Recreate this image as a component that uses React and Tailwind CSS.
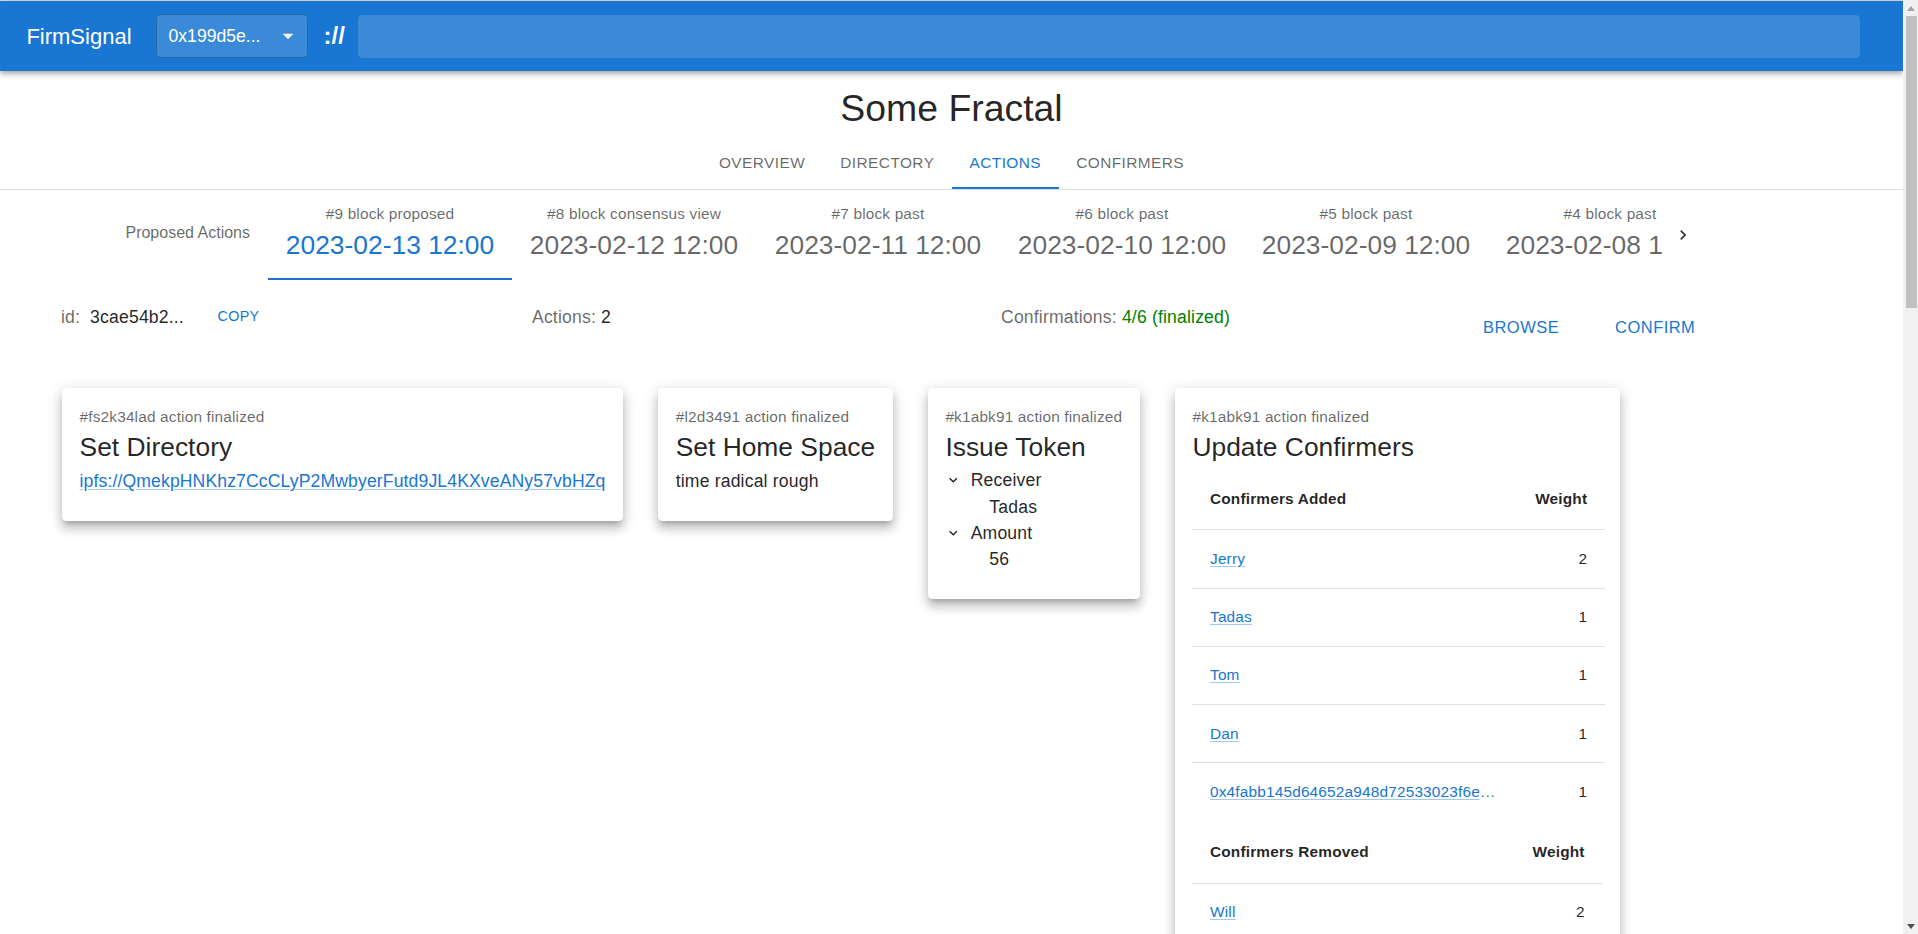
import React from 'react';

const BLOCKS = [
  { label: '#9 block proposed', date: '2023-02-13 12:00', active: true },
  { label: '#8 block consensus view', date: '2023-02-12 12:00' },
  { label: '#7 block past', date: '2023-02-11 12:00' },
  { label: '#6 block past', date: '2023-02-10 12:00' },
  { label: '#5 block past', date: '2023-02-09 12:00' },
  { label: '#4 block past', date: '2023-02-08 12:00' },
  { label: '#3 block past', date: '2023-02-07 12:00' },
];

const PAGE_TABS = ['Overview', 'Directory', 'Actions', 'Confirmers'];

const ADDED = [
  { name: 'Jerry', weight: 2 },
  { name: 'Tadas', weight: 1 },
  { name: 'Tom', weight: 1 },
  { name: 'Dan', weight: 1 },
  { name: '0x4fabb145d64652a948d72533023f6e7a623c7c53', weight: 1 },
];

const REMOVED = [{ name: 'Will', weight: 2 }];

const cardShadow =
  'shadow-[0px_5px_5px_-3px_rgba(0,0,0,0.2),0px_8px_10px_1px_rgba(0,0,0,0.14),0px_3px_14px_2px_rgba(0,0,0,0.12)]';

function ExpandMore() {
  return (
    <svg viewBox="0 0 24 24" className="w-[18px] h-[18px] fill-[#000000de]">
      <path d="M16.59 8.59 12 13.17 7.41 8.59 6 10l6 6 6-6z" />
    </svg>
  );
}

function Card({ overline, title, children, className = '' }) {
  return (
    <div className={`bg-white rounded-[4.4px] px-[17.6px] pt-[17.6px] pb-[26.4px] ${cardShadow} ${className}`}>
      <div className="text-[15.4px] leading-[22px] tracking-[0.16px] text-black/60 whitespace-nowrap">{overline}</div>
      <div className="text-[26.4px] leading-[39.6px] tracking-normal text-black/87 whitespace-nowrap">{title}</div>
      {children}
    </div>
  );
}

function TreeItem({ label, value }) {
  return (
    <div>
      <div className="flex items-center h-[26.4px]">
        <span className="w-[16.5px] mr-[4.4px] flex justify-center">
          <ExpandMore />
        </span>
        <span className="pl-[4.4px]">{label}</span>
      </div>
      <div className="ml-[18.7px] flex items-center h-[26.4px]">
        <span className="w-[16.5px] mr-[4.4px]" />
        <span className="pl-[4.4px]">{value}</span>
      </div>
    </div>
  );
}

function ConfirmerTable({ heading, rows }) {
  return (
    <table className="w-full border-collapse">
      <thead>
        <tr>
          <th className="text-left font-bold text-[15.4px] leading-[27px] p-[17.6px] border-b border-[#e0e0e0] text-black/87">
            {heading}
          </th>
          <th className="text-right font-bold text-[15.4px] leading-[27px] p-[17.6px] border-b border-[#e0e0e0] text-black/87">
            Weight
          </th>
        </tr>
      </thead>
      <tbody>
        {rows.map((r, i) => (
          <tr key={r.name}>
            <td className={`p-[17.6px] text-[15.4px] leading-[22px] ${i < rows.length - 1 ? 'border-b border-[#e0e0e0]' : ''}`}>
              <span className="block max-w-[290px] truncate text-[#1976d2]">
                <a href="#" className="underline decoration-[#1976d266] underline-offset-[2px]">{r.name}</a>
              </span>
            </td>
            <td className={`p-[17.6px] text-[15.4px] leading-[22px] text-right text-black/87 ${i < rows.length - 1 ? 'border-b border-[#e0e0e0]' : ''}`}>
              {r.weight}
            </td>
          </tr>
        ))}
      </tbody>
    </table>
  );
}

// the browser's vertical scrollbar, as it shows in the screenshot
function ScrollBar() {
  return (
    <div className="w-[15px] shrink-0 h-screen bg-[#f1f1f1] flex flex-col">
      <div className="h-[16px] flex items-center justify-center">
        <svg viewBox="0 0 8 5" className="w-[8px] h-[5px] fill-[#a3a3a3]">
          <path d="M4 0 8 5H0z" />
        </svg>
      </div>
      <div className="h-[292px] ml-[3px] mr-[1px] bg-[#c1c1c1]" />
      <div className="flex-1" />
      <div className="h-[16px] flex items-center justify-center">
        <svg viewBox="0 0 8 5" className="w-[8px] h-[5px] fill-[#505050]">
          <path d="M0 0h8L4 5z" />
        </svg>
      </div>
    </div>
  );
}

export default function App() {
  return (
    <div className="h-screen flex bg-white font-['Liberation_Sans',Arial,sans-serif] text-black/87">
      <div className="flex-1 min-w-0 h-screen overflow-y-auto">
        <div className="h-px bg-[#dcdcdc]" />
        {/* App bar */}
        <header className="relative z-10 h-[70px] bg-[#1976d2] flex items-center pl-[26.4px] pr-[26.4px] shadow-[0px_2px_4px_-1px_rgba(0,0,0,0.2),0px_4px_5px_0px_rgba(0,0,0,0.14),0px_1px_10px_0px_rgba(0,0,0,0.12)]">
          <span className="text-[22px] text-white">FirmSignal</span>
          <div className="ml-[24px] w-[152px] h-[44px] shrink-0 rounded-[4.4px] bg-white/15 border border-black/25 flex items-center pl-[12px] pr-[6px] text-white text-[17.6px]">
            <span className="flex-1">0x199d5e...</span>
            <svg viewBox="0 0 24 24" className="w-[26px] h-[26px] fill-white">
              <path d="M7 10l5 5 5-5z" />
            </svg>
          </div>
          <span className="ml-[16px] text-white text-[24px] font-bold">://</span>
          <div className="ml-[13px] mr-[16.6px] flex-1 h-[43px] rounded-[4.4px] bg-white/15" />
        </header>

        {/* Title + page tabs */}
        <h1 className="mt-[14px] text-center text-[37.4px] leading-[46px] text-black/87">Some Fractal</h1>
        <div className="mt-[5px] flex justify-center border-b border-[#e0e0e0]">
          {PAGE_TABS.map(t => {
            const active = t === 'Actions';
            return (
              <div
                key={t}
                className={`relative h-[53px] px-[17.6px] flex items-center text-[15.4px] uppercase tracking-[0.44px] ${
                  active ? 'text-[#1976d2]' : 'text-black/60'
                }`}
              >
                {t}
                {active && <span className="absolute left-0 right-0 bottom-0 h-[2.2px] bg-[#1976d2]" />}
              </div>
            );
          })}
        </div>

        {/* Block tabs */}
        <div className="flex h-[90px]">
          <div className="w-[268px] shrink-0 flex items-center justify-end pr-[18px] pb-[4px] text-[16px] text-black/60">
            Proposed Actions
          </div>
          <div className="w-[1395px] shrink-0 overflow-hidden flex">
            {BLOCKS.map(b => (
              <div key={b.label} className="relative w-[244px] shrink-0 flex flex-col items-center pt-[13px]">
                <div className="text-[15.4px] leading-[22px] tracking-[0.16px] text-black/60 whitespace-nowrap">{b.label}</div>
                <div className={`text-[26.4px] leading-[40px] whitespace-nowrap ${b.active ? 'text-[#1976d2]' : 'text-black/60'}`}>
                  {b.date}
                </div>
                {b.active && <span className="absolute left-0 right-0 bottom-0 h-[2.2px] bg-[#1976d2]" />}
              </div>
            ))}
          </div>
          <div className="w-[40px] shrink-0 flex items-center justify-center">
            <svg viewBox="0 0 24 24" className="w-[20px] h-[20px] fill-black/80">
              <path d="M8.59 16.59 13.17 12 8.59 7.41 10 6l6 6-6 6-1.41-1.41z" />
            </svg>
          </div>
        </div>

        {/* Block info */}
        <div className="flex items-center h-[74px] pl-[61px] text-[17.6px] tracking-[0.17px]">
          <div className="w-[471px] shrink-0 flex items-center">
            <span className="text-black/60">id:</span>
            <span className="ml-[10px] text-black/87">3cae54b2...</span>
            <button className="ml-[28px] px-[5.5px] py-[4px] text-[14.3px] uppercase tracking-[0.4px] text-[#1976d2]">Copy</button>
          </div>
          <div className="w-[469px] shrink-0">
            <span className="text-black/60">Actions: </span>
            <span className="text-black/87">2</span>
          </div>
          <div className="w-[470px] shrink-0">
            <span className="text-black/60">Confirmations: </span>
            <span className="text-[#008000]">4/6 (finalized)</span>
          </div>
          <div className="flex items-center gap-[32px] pt-[20px]">
            <button className="px-[12px] h-[46px] text-[16.5px] uppercase tracking-[0.46px] text-[#1976d2]">Browse</button>
            <button className="px-[12px] h-[46px] text-[16.5px] uppercase tracking-[0.46px] text-[#1976d2]">Confirm</button>
          </div>
        </div>

        {/* Action cards */}
        <div className="mt-[34px] pb-[1900px] pl-[62px] flex items-start gap-[35px] text-[17.6px] tracking-[0.17px]">
          <Card overline="#fs2k34lad action finalized" title="Set Directory">
            <div className="leading-[26.4px] mt-[1px]">
              <a href="#" className="text-[#1976d2] tracking-[0.12px] underline decoration-[#1976d266] underline-offset-[2px]">
                ipfs://QmekpHNKhz7CcCLyP2MwbyerFutd9JL4KXveANy57vbHZq
              </a>
            </div>
          </Card>
          <Card overline="#l2d3491 action finalized" title="Set Home Space">
            <div className="leading-[26.4px] mt-[1px] text-black/87">time radical rough</div>
          </Card>
          <Card overline="#k1abk91 action finalized" title="Issue Token">
            <div className="text-black/87">
              <TreeItem label="Receiver" value="Tadas" />
              <TreeItem label="Amount" value="56" />
            </div>
          </Card>
          <Card overline="#k1abk91 action finalized" title="Update Confirmers" className="w-[445px]">
            <ConfirmerTable heading="Confirmers Added" rows={ADDED} />
            <ConfirmerTable heading="Confirmers Removed" rows={REMOVED} />
          </Card>
        </div>
      </div>
      <ScrollBar />
    </div>
  );
}
